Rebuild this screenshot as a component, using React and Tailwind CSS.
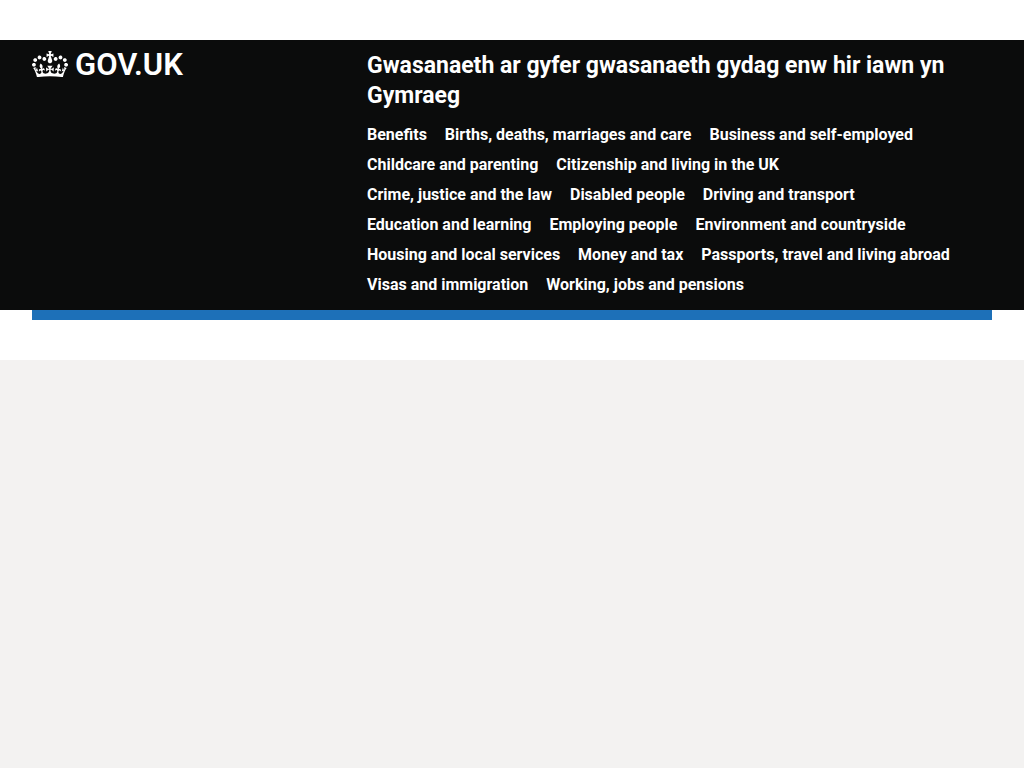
const topics = [
  'Benefits',
  'Births, deaths, marriages and care',
  'Business and self-employed',
  'Childcare and parenting',
  'Citizenship and living in the UK',
  'Crime, justice and the law',
  'Disabled people',
  'Driving and transport',
  'Education and learning',
  'Employing people',
  'Environment and countryside',
  'Housing and local services',
  'Money and tax',
  'Passports, travel and living abroad',
  'Visas and immigration',
  'Working, jobs and pensions',
];

function Crown() {
  return (
    <svg aria-hidden="true" viewBox="0 0 132 97" className="mt-px w-9 shrink-0 fill-current">
      <path d="M25 30.2c3.5 1.5 7.7-.2 9.1-3.7 1.5-3.6-.2-7.8-3.9-9.2-3.6-1.4-7.6.3-9.1 3.9-1.4 3.5.3 7.5 3.9 9zM9 39.5c3.6 1.5 7.8-.2 9.2-3.7 1.5-3.6-.2-7.8-3.9-9.1-3.6-1.5-7.6.2-9.1 3.8-1.4 3.5.3 7.5 3.8 9zM4.4 57.2c3.5 1.5 7.7-.2 9.1-3.8 1.5-3.6-.2-7.7-3.9-9.1-3.5-1.5-7.6.3-9.1 3.8-1.4 3.5.3 7.6 3.9 9.1zm38.3-21.4c3.5 1.5 7.7-.2 9.1-3.8 1.5-3.6-.2-7.7-3.9-9.1-3.6-1.5-7.6.3-9.1 3.8-1.3 3.6.4 7.7 3.9 9.1zm64.4-5.6c-3.6 1.5-7.8-.2-9.1-3.7-1.5-3.6.2-7.8 3.8-9.2 3.6-1.4 7.7.3 9.2 3.9 1.3 3.5-.4 7.5-3.9 9zm15.9 9.3c-3.6 1.5-7.7-.2-9.1-3.7-1.5-3.6.2-7.8 3.7-9.1 3.6-1.5 7.7.2 9.2 3.8 1.5 3.5-.3 7.5-3.8 9zm4.7 17.7c-3.6 1.5-7.8-.2-9.2-3.8-1.5-3.6.2-7.7 3.9-9.1 3.6-1.5 7.7.3 9.2 3.8 1.3 3.5-.4 7.6-3.9 9.1zM89.3 35.8c-3.6 1.5-7.8-.2-9.2-3.8-1.4-3.6.2-7.7 3.9-9.1 3.6-1.5 7.7.3 9.2 3.8 1.4 3.6-.3 7.7-3.9 9.1zM69.7 17.7l8.9 4.7V9.3l-8.9 2.8c-.2-.3-.5-.6-.9-.9L72.4 0H59.6l3.5 11.2c-.3.3-.6.5-.9.9l-8.8-2.8v13.1l8.8-4.7c.3.3.6.7.9.9l-5 15.4v.1c-.2.8-.4 1.6-.4 2.4 0 4.1 3.1 7.5 7 8.1h.2c.3 0 .7.1 1 .1.4 0 .7 0 1-.1h.2c4-.6 7.1-4.1 7.1-8.1 0-.8-.1-1.7-.4-2.4V34l-5.1-15.4c.4-.2.7-.6 1-.9zM66 92.8c16.9 0 32.8 1.1 47.1 3.2 4-16.9 8.9-26.7 14-33.5l-9.6-3.4c1 4.9 1.1 7.2 0 10.2-1.5-1.4-3-4.3-4.2-8.7L108.6 76c2.8-2 5-3.2 7.5-3.3-4.4 9.4-10 11.9-13.6 11.2-4.3-.8-6.3-4.6-5.6-7.9 1-4.7 5.7-5.9 8-.5 4.3-8.7-3-11.4-7.6-8.8 7.1-7.2 7.9-13.5 2.1-21.1-8 6.1-8.1 12.3-4.5 20.8-4.7-5.4-12.1-2.5-9.5 6.2 3.4-5.2 7.9-2 7.2 3.1-.6 4.3-6.4 7.8-13.5 7.2-10.3-.9-10.9-8-11.2-13.8 2.5-.5 7.1 1.8 11 7.3L80.2 60c-4.1 4.4-8 5.3-12.3 5.4 1.4-4.4 8-11.6 8-11.6H55.5s6.4 7.2 7.9 11.6c-4.2-.1-8-1-12.3-5.4l1.4 16.4c3.9-5.5 8.5-7.7 10.9-7.3-.3 5.8-.9 12.8-11.1 13.8-7.2.6-12.9-2.9-13.5-7.2-.7-5 3.8-8.3 7.1-3.1 2.7-8.7-4.6-11.6-9.4-6.2 3.7-8.5 3.6-14.7-4.6-20.8-5.8 7.6-5 13.9 2.2 21.1-4.7-2.6-11.9.1-7.7 8.8 2.3-5.5 7.1-4.2 8.1.5.7 3.3-1.3 7.1-5.7 7.9-3.5.7-9-1.8-13.5-11.2 2.5.1 4.7 1.3 7.5 3.3l-4.7-15.4c-1.2 4.4-2.7 7.2-4.3 8.7-1.1-3-.9-5.3 0-10.2l-9.5 3.4c5 6.9 9.9 16.7 14 33.5 14.8-2.1 30.8-3.2 47.7-3.2z" />
    </svg>
  );
}

export default function App() {
  return (
    <div className="min-h-screen bg-[#f3f2f1] font-['Roboto','Liberation_Sans',sans-serif]">
      <div className="bg-white py-10">
        <header className="bg-[#0b0c0c] text-white">
          <div className="mx-auto grid max-w-[1024px] grid-cols-[1fr_2fr] px-8 py-2.5">
            <div>
              <a href="#" className="inline-flex items-start gap-[7px] text-[31px] leading-[30px] font-semibold">
                <Crown />
                <span>GOV.UK</span>
              </a>
            </div>
            <div className="pl-[15px]">
              <a href="#" className="block pt-px text-[23px] leading-[30px] font-bold">
                Gwasanaeth ar gyfer gwasanaeth gydag enw hir iawn yn Gymraeg
              </a>
              <nav aria-label="Menu" className="mt-[9px]">
                <ul className="flex flex-wrap gap-x-[18px] pr-[15px] text-base leading-[30px] font-bold">
                  {topics.map((topic) => (
                    <li key={topic}>
                      <a href="#">{topic}</a>
                    </li>
                  ))}
                </ul>
              </nav>
            </div>
          </div>
        </header>
        <div className="mx-auto max-w-[1024px] px-8">
          <div className="h-2.5 bg-[#1d70b8]" />
        </div>
      </div>
    </div>
  );
}
